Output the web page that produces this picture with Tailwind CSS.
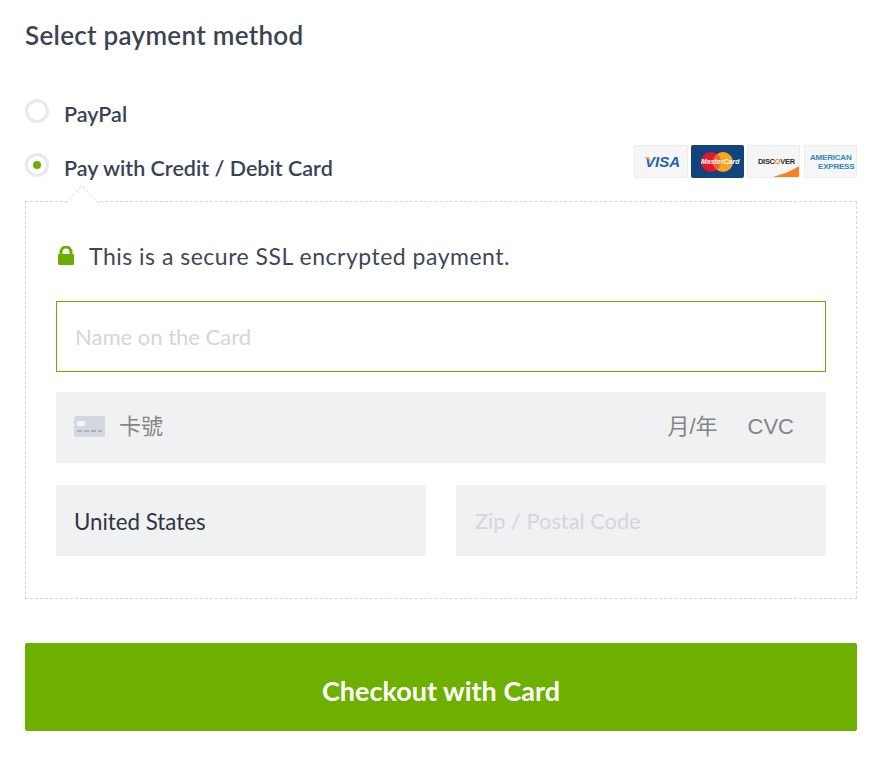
<!doctype html>
<html>
<head>
<meta charset="utf-8">
<script src="https://cdn.jsdelivr.net/npm/@tailwindcss/browser@4"></script>
</head>
<body class="bg-white font-['Lato','Noto_Sans_CJK_TC',sans-serif] text-[#3a4356]">
<div class="w-[890px] h-[757px] overflow-hidden pl-[25px] pr-[33px]">

	<h2 class="h-[32px] mt-[19px] text-[26px] leading-[32px] font-semibold tracking-[0.3px] text-[#3c4454]">Select payment method</h2>

	<div class="flex items-center h-[24px] mt-[48px]">
		<span class="block w-[24px] h-[24px] rounded-full border-[3px] border-[#e6eaee]"></span>
		<span class="ml-[15px] relative top-[3px] text-[21.500px] leading-[24px] font-semibold">PayPal</span>
	</div>

	<div class="flex items-start justify-between h-[33px] mt-[22px]">
		<div class="flex items-center mt-[8px]">
			<span class="flex items-center justify-center w-[24px] h-[24px] rounded-full border-[3px] border-[#e6eaee]">
				<span class="block w-[8px] h-[8px] rounded-full bg-[#6bad00]"></span>
			</span>
			<span class="ml-[15px] relative top-[3px] text-[21.500px] leading-[24px] font-semibold">Pay with Credit / Debit Card</span>
		</div>
		<div class="flex gap-[3px]">
			<div class="relative flex items-center justify-center w-[54px] h-[33px] rounded-[2px] bg-[#f6f6f6] border border-[#ececec]">
				<svg class="absolute left-[9px] top-[11px]" width="8" height="6" viewBox="0 0 8 6">
					<path d="M0 0h5l2 5C5 3 3 1 0 0z" fill="#f2a33a"/>
				</svg>
				<span class="ml-[3px] font-['Liberation_Sans'] italic font-bold text-[15px] leading-none text-[#1a66ad]">VISA</span>
			</div>
			<div class="relative w-[53px] h-[33px] rounded-[2px] bg-[#13437c]">
				<svg width="53" height="33" viewBox="0 0 53 33">
					<circle cx="20" cy="17" r="10" fill="#e2162c"/>
					<circle cx="32" cy="17" r="10" fill="#f9a61e"/>
					<path d="M26 9a10 10 0 0 1 0 16a10 10 0 0 1 0-16z" fill="#f0652a"/>
				</svg>
				<span class="absolute left-[10px] top-[13px] font-['Liberation_Sans'] italic font-bold text-[7px] leading-[7px] text-white">MasterCard</span>
			</div>
			<div class="relative w-[53px] h-[33px] rounded-[2px] bg-[#f6f6f6] border border-[#ececec] overflow-hidden">
				<svg class="absolute left-0 top-0" width="53" height="33" viewBox="0 0 53 33">
					<path d="M17 33C30 30 43 26 53 19V33z" fill="#f58220"/>
				</svg>
				<span class="absolute left-[10px] top-[12px] font-['Liberation_Sans'] font-bold text-[7.500px] leading-[8px] tracking-[-0.3px] text-[#2b2b2b]">DISC<span class="text-[#f58220]">O</span>VER</span>
			</div>
			<div class="flex flex-col items-start justify-center w-[53px] ml-[1px] h-[33px] rounded-[2px] bg-[#f6f6f6] border border-[#ececec] pl-[5px] font-['Liberation_Sans'] font-bold text-[8px] leading-[9px] tracking-[-0.2px] text-[#2f86bf]">
				<span>AMERICAN</span>
				<span class="ml-[8px]">EXPRESS</span>
			</div>
		</div>
	</div>

	<div class="relative mt-[23px] h-[398px] border border-dashed border-[#d4d7db] pt-[99px] px-[30px]">
		<svg class="absolute left-[39px] top-[-17px]" width="34" height="18" viewBox="0 0 34 18">
			<path d="M0 17.500h1L17 1l16 16.500h1" fill="#fff" stroke="#d4d7db" stroke-dasharray="3 2"/>
		</svg>
		<div class="absolute left-[31px] top-[41px] flex items-center">
			<svg width="18" height="20" viewBox="0 0 18 20">
				<path d="M4 9V6a5 5 0 0 1 10 0v3" fill="none" stroke="#6bad00" stroke-width="3"/>
				<rect x="1" y="8" width="16" height="11" rx="1" fill="#6bad00"/>
			</svg>
			<span class="ml-[14px] text-[23px] leading-[26px] tracking-[0.5px] text-[#3f4757]">This is a secure SSL encrypted payment.</span>
		</div>

		<div class="flex items-center h-[71px] border border-[#6bad00] pl-[18px] text-[22px] text-[#d3d6dc]">Name on the Card</div>

		<div class="flex items-center h-[71px] mt-[20px] bg-[#f0f1f3] pl-[18px] pr-[32px] pb-[2px] font-['Liberation_Sans','Noto_Sans_CJK_TC',sans-serif] text-[22px] text-[#858585]">
			<svg width="31" height="21" viewBox="0 0 31 21">
				<rect width="31" height="21" rx="2" fill="#d2d7e0"/>
				<rect x="3" y="5" width="8" height="5" rx="1" fill="#f3f4f6"/>
				<path d="M3 15h5M10 15h5M17 15h5M24 15h4" stroke="#aab0bc" stroke-width="2"/>
			</svg>
			<span class="ml-[14px]">卡號</span>
			<span class="ml-auto">月/年</span>
			<span class="ml-[30px]">CVC</span>
		</div>

		<div class="grid grid-cols-2 gap-[30px] mt-[22px]">
			<div class="flex items-center h-[71px] bg-[#f0f1f3] pl-[18px] pt-[2px] text-[22.300px] text-[#2f3540]">United States</div>
			<div class="flex items-center h-[71px] bg-[#f0f1f3] pl-[19px] pt-[2px] text-[21.800px] text-[#d3d6dc]">Zip / Postal Code</div>
		</div>
	</div>

	<button class="block w-full h-[88px] mt-[44px] pt-[8px] rounded-[2px] bg-[#6db000] text-white text-[27px] font-bold">Checkout with Card</button>
</div>
</body>
</html>
